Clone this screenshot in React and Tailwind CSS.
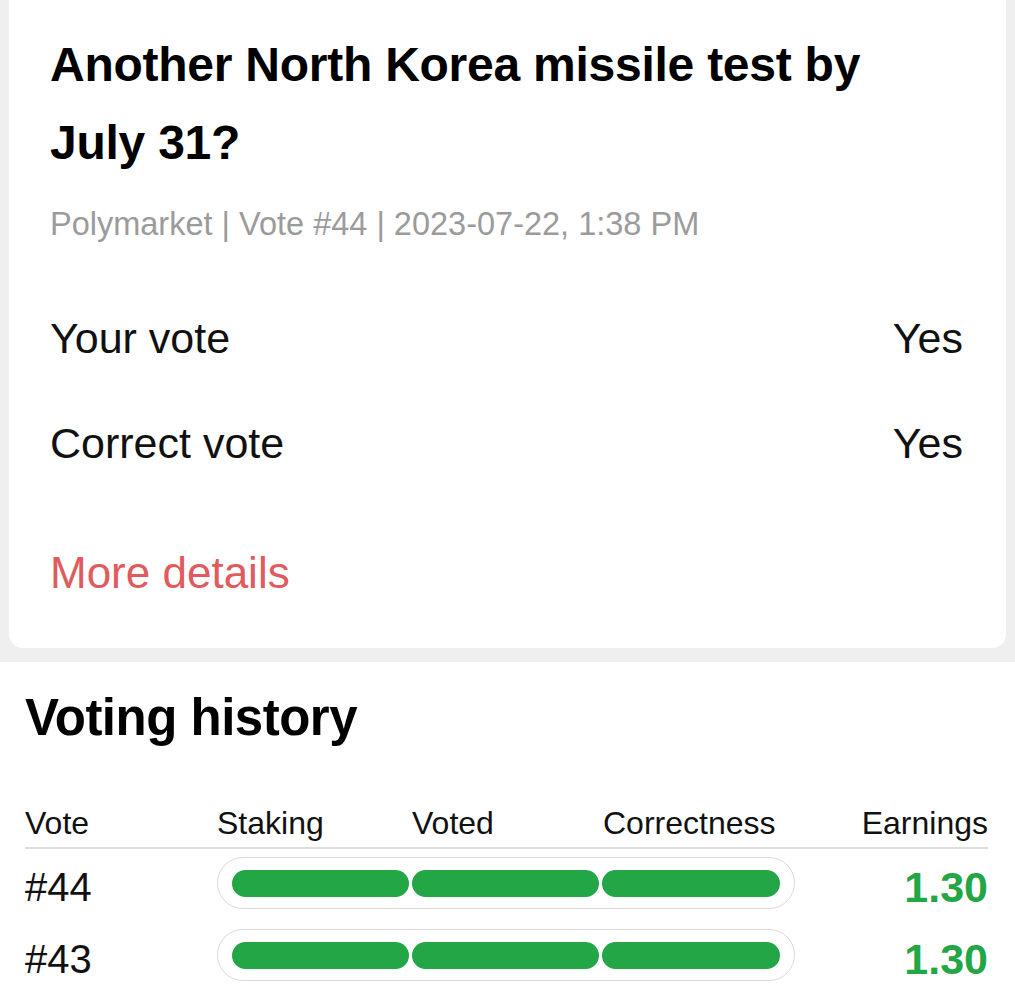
import React from 'react';

const rows = [
  { id: '#44', earnings: '1.30' },
  { id: '#43', earnings: '1.30' },
];

function VoteBar() {
  return (
    <div className="w-[578px] h-[52px] rounded-full border-[1.5px] border-[#dadada] bg-white flex items-center gap-[3px] px-[14px]">
      <div className="w-[177px] h-[27px] rounded-full bg-[#23a646]" />
      <div className="w-[188px] h-[27px] rounded-full bg-[#23a646]" />
      <div className="w-[178px] h-[27px] rounded-full bg-[#23a646]" />
    </div>
  );
}

export default function App() {
  return (
    <div className="min-h-screen bg-[#efefef] font-['Liberation_Sans',Arial,sans-serif]">
      {/* Vote card */}
      <div className="mx-[9px] bg-white rounded-b-[14px] pl-[41px] pr-[43px] pt-[26px] pb-[51px]">
        <h1 className="text-[48px] leading-[78px] font-bold tracking-[-0.25px] text-black">
          Another North Korea missile test by July 31?
        </h1>
        <p className="mt-[22px] text-[32.5px] leading-[40px] text-[#9b9b9b]">
          Polymarket | Vote #44 | 2023-07-22, 1:38 PM
        </p>

        <div className="mt-[70px] flex justify-between text-[43px] leading-[48px] text-[#111]">
          <span>Your vote</span>
          <span>Yes</span>
        </div>
        <div className="mt-[57px] flex justify-between text-[43px] leading-[48px] text-[#111]">
          <span>Correct vote</span>
          <span>Yes</span>
        </div>

        <button className="mt-[82px] block text-[44px] leading-[48px] text-[#df5b5d]">
          More details
        </button>
      </div>

      {/* Voting history */}
      <div className="mt-[14px] bg-white pl-[25px] pr-[27px] pt-[28px] pb-10">
        <h2 className="text-[51px] leading-[56px] font-bold tracking-[-0.5px] text-black">
          Voting history
        </h2>

        <div className="mt-[60px] flex items-end pb-[7px] border-b-2 border-[#dedede] text-[32px] leading-[34px] text-[#111]">
          <span className="w-[192px]">Vote</span>
          <span className="w-[195px]">Staking</span>
          <span className="w-[191px]">Voted</span>
          <span className="flex-1">Correctness</span>
          <span>Earnings</span>
        </div>

        <div className="mt-[8px] flex flex-col gap-[20px]">
          {rows.map((row) => (
            <div key={row.id} className="flex items-center">
              <span className="w-[192px] pt-[8px] text-[40px] leading-[40px] text-[#111]">{row.id}</span>
              <VoteBar />
              <span className="flex-1 pt-[8px] text-right text-[43px] leading-[40px] font-bold text-[#23a646]">
                {row.earnings}
              </span>
            </div>
          ))}
        </div>
      </div>
    </div>
  );
}
